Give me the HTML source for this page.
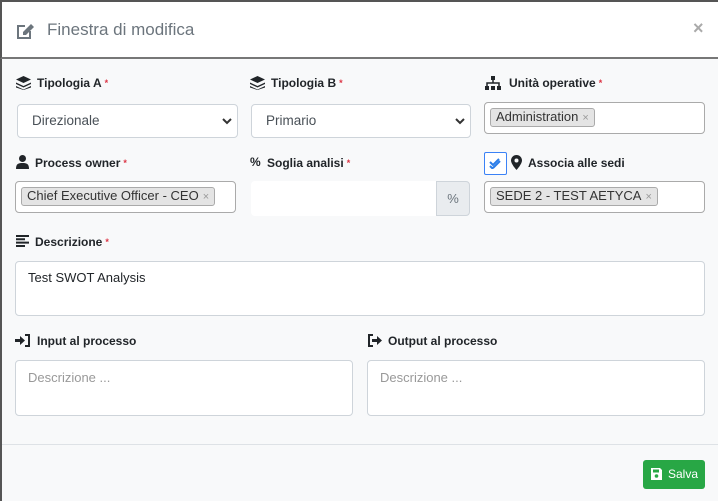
<!DOCTYPE html>
<html><head><meta charset="utf-8"><style>
*{box-sizing:border-box;margin:0;padding:0}
body{width:718px;height:501px;background:#f8f9fa;font-family:"Liberation Sans",sans-serif;position:relative;overflow:hidden;color:#212529}
.a{position:absolute}
.hdr{left:0;top:0;width:718px;height:59px;background:#fff;border-top:2px solid #555;border-left:2px solid #555;border-bottom:2px solid #777}
.lb{position:absolute;font-size:12px;font-weight:bold;color:#212529;white-space:nowrap;line-height:16px}
.req{color:#dc3545;font-size:9px;vertical-align:top;margin-left:3px}
.box{position:absolute;background:#fff;border:1px solid #ced4da;border-radius:4px;font-size:13.5px;color:#495057}
.tag{position:absolute;left:5px;top:5px;background:#e4e4e4;border:1px solid #aaa;border-radius:3px;font-size:13px;color:#333;padding:0 5px;line-height:16px;white-space:nowrap}
.tag i{font-style:normal;color:#999;font-size:11px;margin-left:4px}
.ph{color:#999}
svg{position:absolute}
</style></head><body>
<div class="a" style="left:0;top:0;width:2px;height:501px;background:#555"></div>
<div class="a hdr"></div>
<svg style="left:15px;top:21px" width="20" height="19" viewBox="0 0 20 19"><path d="M2 4h8v2H4v10h10v-6h2v8H2z" fill="#6c757d"/><path d="M8 11l8-8 3 3-8 8H8z" fill="#6c757d"/></svg>
<div class="a" style="left:47px;top:20px;font-size:17px;color:#6c757d">Finestra di modifica</div>
<div class="a" style="left:693px;top:18px;font-size:18px;color:#aaa;font-weight:bold">×</div>

<svg style="left:16px;top:76px" width="15" height="14" viewBox="0 0 15 14"><path d="M7.5 0L15 3.5 7.5 7 0 3.5z M0 6.5l7.5 3.5 7.5-3.5v1.5L7.5 11.5 0 8z M0 10l7.5 3.5L15 10v1.5L7.5 14 0 11.5z" fill="#212529"/></svg>
<div class="lb" style="left:37px;top:75px">Tipologia A<span class="req">*</span></div>
<svg style="left:250px;top:76px" width="15" height="14" viewBox="0 0 15 14"><path d="M7.5 0L15 3.5 7.5 7 0 3.5z M0 6.5l7.5 3.5 7.5-3.5v1.5L7.5 11.5 0 8z M0 10l7.5 3.5L15 10v1.5L7.5 14 0 11.5z" fill="#212529"/></svg>
<div class="lb" style="left:271px;top:75px">Tipologia B<span class="req">*</span></div>
<svg style="left:484px;top:76px" width="18" height="14" viewBox="0 0 18 14"><rect x="7" y="0" width="4" height="4" fill="#212529"/><path d="M9 4v3M3 10V7h12v3" stroke="#212529" stroke-width="1.5" fill="none"/><rect x="1" y="10" width="4" height="4" fill="#212529"/><rect x="7" y="10" width="4" height="4" fill="#212529"/><rect x="13" y="10" width="4" height="4" fill="#212529"/></svg>
<div class="lb" style="left:509px;top:75px">Unità operative<span class="req">*</span></div>

<div class="box" style="left:17px;top:104px;width:221px;height:34px"><span class="a" style="left:14px;top:8px">Direzionale</span>
<svg style="left:204px;top:13px" width="10" height="7" viewBox="0 0 10 7"><path d="M1 1l4 4 4-4" stroke="#333" stroke-width="2" fill="none"/></svg></div>
<div class="box" style="left:251px;top:104px;width:220px;height:34px"><span class="a" style="left:14px;top:8px">Primario</span>
<svg style="left:203px;top:13px" width="10" height="7" viewBox="0 0 10 7"><path d="M1 1l4 4 4-4" stroke="#333" stroke-width="2" fill="none"/></svg></div>
<div class="box" style="left:484px;top:102px;width:221px;height:32px;border-color:#aaa"><span class="tag">Administration<i>×</i></span></div>

<svg style="left:16px;top:155px" width="13" height="14" viewBox="0 0 13 14"><circle cx="6.5" cy="3.5" r="3.5" fill="#212529"/><path d="M0 14c0-5 2-6 6.5-6s6.5 1 6.5 6z" fill="#212529"/></svg>
<div class="lb" style="left:35px;top:155px">Process owner<span class="req">*</span></div>
<div class="a" style="left:250px;top:155px;font-size:12px;font-weight:bold">%</div>
<div class="lb" style="left:267px;top:155px">Soglia analisi<span class="req">*</span></div>
<div class="a" style="left:484px;top:152px;width:23px;height:23px;border:1px solid #3b82f6;border-radius:2px;background:#fff"></div>
<svg style="left:489px;top:158px" width="13" height="11" viewBox="0 0 13 11"><path d="M1 4l3 3 6-6M1 8l3 3" stroke="#2b7de9" stroke-width="2" fill="none"/><path d="M4 10l7-7" stroke="#2b7de9" stroke-width="2"/></svg>
<svg style="left:511px;top:155px" width="11" height="15" viewBox="0 0 11 15"><path d="M5.5 0C2.5 0 0 2.4 0 5.5 0 9 5.5 15 5.5 15S11 9 11 5.5C11 2.4 8.5 0 5.5 0z" fill="#212529"/><circle cx="5.5" cy="5.5" r="2" fill="#f8f9fa"/></svg>
<div class="lb" style="left:528px;top:155px">Associa alle sedi</div>

<div class="box" style="left:15px;top:181px;width:221px;height:32px;border-color:#aaa"><span class="tag">Chief Executive Officer - CEO<i>×</i></span></div>
<div class="a" style="left:251px;top:181px;width:186px;height:35px;background:#fff;border-radius:4px 0 0 4px"></div>
<div class="a" style="left:436px;top:181px;width:34px;height:35px;background:#e9ecef;border:1px solid #ced4da;border-radius:0 4px 4px 0;font-size:13px;color:#6c757d;text-align:center;line-height:33px">%</div>
<div class="box" style="left:484px;top:181px;width:221px;height:32px;border-color:#aaa"><span class="tag">SEDE 2 - TEST AETYCA<i>×</i></span></div>

<svg style="left:16px;top:235px" width="14" height="12" viewBox="0 0 14 12"><path d="M0 0h13v2H0zM0 3.3h9v2H0zM0 6.6h13v2H0zM0 10h9v2H0z" fill="#212529"/></svg>
<div class="lb" style="left:35px;top:234px">Descrizione<span class="req">*</span></div>
<div class="box" style="left:15px;top:261px;width:690px;height:55px;font-size:13px"><span class="a" style="left:12px;top:8px;color:#212529">Test SWOT Analysis</span></div>

<svg style="left:15px;top:334px" width="16" height="13" viewBox="0 0 16 13"><path d="M0 5h5V2l5 4.5-5 4.5V8H0z" fill="#212529"/><path d="M10 1h4v11h-4" stroke="#212529" stroke-width="2" fill="none"/></svg>
<div class="lb" style="left:37px;top:333px">Input al processo</div>
<svg style="left:367px;top:334px" width="16" height="13" viewBox="0 0 16 13"><path d="M6 1H2v11h4" stroke="#212529" stroke-width="2" fill="none"/><path d="M5 5h5V2l5 4.5-5 4.5V8H5z" fill="#212529"/></svg>
<div class="lb" style="left:388px;top:333px">Output al processo</div>
<div class="box" style="left:15px;top:360px;width:338px;height:56px;font-size:13px"><span class="a ph" style="left:12px;top:9px">Descrizione ...</span></div>
<div class="box" style="left:367px;top:360px;width:338px;height:56px;font-size:13px"><span class="a ph" style="left:12px;top:9px">Descrizione ...</span></div>

<div class="a" style="left:2px;top:444px;width:716px;height:1px;background:#dee2e6"></div>
<div class="a" style="left:643px;top:460px;width:62px;height:29px;background:#28a745;border-radius:3px;color:#fff;font-size:12px;line-height:29px">
<svg style="left:8px;top:8px" width="11" height="12" viewBox="0 0 11 12"><path d="M0 0h9l2 2v10H0z" fill="#fff"/><rect x="2" y="1.5" width="6" height="3" fill="#28a745"/><circle cx="5.5" cy="8" r="1.8" fill="#28a745"/></svg>
<span class="a" style="left:25px;top:0">Salva</span></div>
</body></html>
